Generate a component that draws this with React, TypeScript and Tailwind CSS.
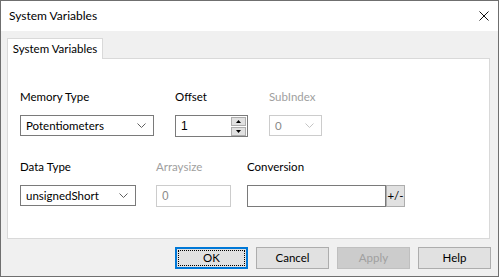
import React from "react";

const ui = { fontFamily: 'Lato, "Noto Sans", sans-serif' };

function Chevron({ disabled }: { disabled?: boolean }) {
  return (
    <svg width="9" height="5" viewBox="0 0 9 5" className="shrink-0">
      <path
        d="M0.5 0.5 L4.5 4.5 L8.5 0.5"
        fill="none"
        stroke={disabled ? "#c4c4c4" : "#606060"}
        strokeWidth="1"
      />
    </svg>
  );
}

function Select({ value, width, disabled }: { value: string; width: string; disabled?: boolean }) {
  return (
    <div
      className={`flex h-[21px] items-center justify-between border pl-[5px] pr-[7px] text-[11.5px] ${width} ${
        disabled ? "border-[#cccccc] text-[#8a8a8a]" : "border-[#7a7a7a] text-black"
      } bg-white`}
    >
      <span className="leading-none">{value}</span>
      <Chevron disabled={disabled} />
    </div>
  );
}

function Label({ children, disabled }: { children: React.ReactNode; disabled?: boolean }) {
  return (
    <div className={`mb-[10px] h-[16px] whitespace-nowrap text-[11.5px] leading-[16px] ${disabled ? "text-[#a0a0a0]" : "text-black"}`}>
      {children}
    </div>
  );
}

function Button({ children, primary, disabled }: { children: React.ReactNode; primary?: boolean; disabled?: boolean }) {
  if (primary) {
    return (
      <div className="flex h-[22px] w-[73px] items-center justify-center border-2 border-[#0078d7] bg-[#e1e1e1] p-px">
        <div className="flex h-full w-full items-center justify-center border border-dotted border-black text-[11.5px] text-black">
          {children}
        </div>
      </div>
    );
  }
  return (
    <div
      className={`flex h-[22px] w-[73px] items-center justify-center border text-[11.5px] ${
        disabled ? "border-[#bfbfbf] bg-[#cccccc] text-[#a0a0a0]" : "border-[#adadad] bg-[#e1e1e1] text-black"
      }`}
    >
      {children}
    </div>
  );
}

export default function App() {
  return (
    <div className="flex h-[277px] w-[499px] flex-col border border-[#6f6f6f] bg-[#f0f0f0]" style={ui}>
      <div className="flex h-[30px] items-center justify-between bg-white pl-[8px] pr-[9px]">
        <span className="text-[12px] text-black">System Variables</span>
        <svg width="10" height="10" viewBox="0 0 10 10">
          <path d="M0.5 0.5 L9.5 9.5 M9.5 0.5 L0.5 9.5" stroke="#111" strokeWidth="1" />
        </svg>
      </div>

      <div className="flex flex-col px-[6px] pt-[7px]">
        <div className="relative z-10 -mb-px flex h-[21px] w-[96px] items-center justify-center whitespace-nowrap border border-b-0 border-[#d9d9d9] bg-white text-[11.5px] text-black">
          System Variables
        </div>
        <div className="h-[181px] w-[483px] border border-[#d9d9d9] bg-white pl-[12px] pt-[30px]">
          <div className="flex">
            <div className="mr-[21px] flex flex-col">
              <Label>Memory Type</Label>
              <Select value="Potentiometers" width="w-[134px]" />
            </div>
            <div className="mr-[21px] flex flex-col">
              <Label>Offset</Label>
              <div className="flex h-[22px] w-[73px] items-center justify-between border border-[#7a7a7a] bg-white pl-[5px] pr-px">
                <span className="text-[12px] leading-none" style={{ fontFamily: '"Liberation Sans", sans-serif' }}>
                  1
                </span>
                <div className="flex flex-col gap-px">
                  <div className="flex h-[9px] w-[15px] items-center justify-center border border-[#adadad] bg-[#e1e1e1]">
                    <svg width="5" height="3" viewBox="0 0 5 3">
                      <path d="M0 3 L2.5 0 L5 3 Z" fill="#000" />
                    </svg>
                  </div>
                  <div className="flex h-[9px] w-[15px] items-center justify-center border border-[#adadad] bg-[#e1e1e1]">
                    <svg width="5" height="3" viewBox="0 0 5 3">
                      <path d="M0 0 L2.5 3 L5 0 Z" fill="#000" />
                    </svg>
                  </div>
                </div>
              </div>
            </div>
            <div className="flex flex-col">
              <Label disabled>SubIndex</Label>
              <Select value="0" width="w-[53px]" disabled />
            </div>
          </div>

          <div className="mt-[22px] flex">
            <div className="mr-[20px] flex flex-col">
              <Label>Data Type</Label>
              <Select value="unsignedShort" width="w-[116px]" />
            </div>
            <div className="mr-[16px] flex flex-col">
              <Label disabled>Arraysize</Label>
              <div className="flex h-[22px] w-[75px] items-center border border-[#cccccc] bg-white pl-[5px] text-[12px] text-[#8a8a8a]">
                <span className="leading-none" style={{ fontFamily: '"Liberation Sans", sans-serif' }}>
                  0
                </span>
              </div>
            </div>
            <div className="flex flex-col">
              <Label>Conversion</Label>
              <div className="flex">
                <div className="h-[22px] w-[139px] border border-[#7a7a7a] bg-white" />
                <div className="flex h-[22px] w-[19px] items-center justify-center border border-[#adadad] bg-[#e1e1e1] text-[11.5px] text-black">
                  +/-
                </div>
              </div>
            </div>
          </div>
        </div>
      </div>

      <div className="mt-[8px] flex justify-end gap-[8px] pr-[7px]">
        <Button primary>OK</Button>
        <Button>Cancel</Button>
        <Button disabled>Apply</Button>
        <Button>Help</Button>
      </div>
    </div>
  );
}
